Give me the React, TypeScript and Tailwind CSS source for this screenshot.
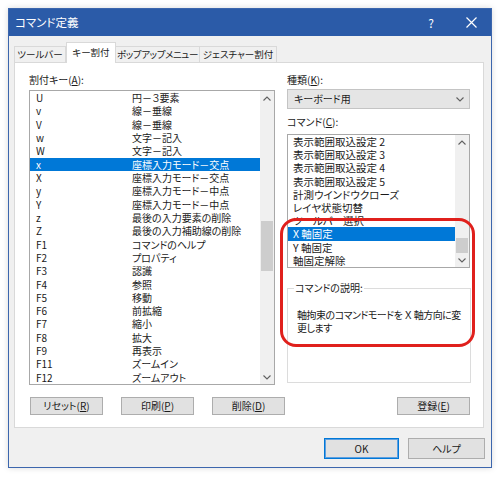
import React from "react";

const leftRows: [string, string][] = [
  ["U", "円－３要素"],
  ["v", "線－垂線"],
  ["V", "線－垂線"],
  ["w", "文字－記入"],
  ["W", "文字－記入"],
  ["x", "座標入力モード－交点"],
  ["X", "座標入力モード－交点"],
  ["y", "座標入力モード－中点"],
  ["Y", "座標入力モード－中点"],
  ["z", "最後の入力要素の削除"],
  ["Z", "最後の入力補助線の削除"],
  ["F1", "コマンドのヘルプ"],
  ["F2", "プロパティ"],
  ["F3", "認識"],
  ["F4", "参照"],
  ["F5", "移動"],
  ["F6", "前拡縮"],
  ["F7", "縮小"],
  ["F8", "拡大"],
  ["F9", "再表示"],
  ["F11", "ズームイン"],
  ["F12", "ズームアウト"],
];

const commands = [
  "表示範囲取込設定 2",
  "表示範囲取込設定 3",
  "表示範囲取込設定 4",
  "表示範囲取込設定 5",
  "計測ウインドウクローズ",
  "レイヤ状態切替",
  "ツールバー選択",
  "X 軸固定",
  "Y 軸固定",
  "軸固定解除",
];

function Chevron({ up }: { up?: boolean }) {
  return (
    <svg width="8" height="5" viewBox="0 0 8 5">
      <polyline
        points={up ? "0.5,4.5 4,1 7.5,4.5" : "0.5,0.5 4,4 7.5,0.5"}
        fill="none"
        stroke="#606060"
        strokeWidth="1.1"
      />
    </svg>
  );
}

function Scrollbar({ thumbTop, thumbH }: { thumbTop: number; thumbH: number }) {
  return (
    <div className="w-[14px] bg-[#f0f0f0] flex flex-col">
      <div className="h-[14px] flex items-center justify-center">
        <Chevron up />
      </div>
      <div className="flex-1 px-[1px]">
        <div className="bg-[#cdcdcd]" style={{ marginTop: thumbTop, height: thumbH }} />
      </div>
      <div className="h-[14px] flex items-center justify-center">
        <Chevron />
      </div>
    </div>
  );
}

function Btn({ children }: { children: React.ReactNode }) {
  return (
    <div className="w-[73px] h-[18px] bg-[#e1e1e1] border border-[#adadad] flex items-center justify-center text-[10px] leading-none">
      {children}
    </div>
  );
}

export default function App() {
  return (
    <div className="w-[500px] h-[489px] bg-white relative overflow-hidden font-['Noto_Sans_CJK_JP',sans-serif] [font-feature-settings:'palt'] text-[#1a1a1a]">
      <div className="ml-[8px] mt-[8px] w-[484px] h-[460px] border border-[#3c66ad] flex flex-col shadow-[0_0_6px_rgba(0,0,0,0.15)]">
        {/* title bar */}
        <div className="h-[27px] bg-[#2b5ba8] flex items-center text-white">
          <div className="pl-[6px] text-[11.5px] leading-none">コマンド定義</div>
          <div className="ml-auto w-[40px] text-center text-[12px] leading-none">?</div>
          <div className="w-[40px] flex justify-center">
            <svg width="11" height="11" viewBox="0 0 11 11">
              <path d="M0.5 0.5 L10.5 10.5 M10.5 0.5 L0.5 10.5" stroke="white" strokeWidth="1.2" />
            </svg>
          </div>
        </div>

        {/* body */}
        <div className="flex-1 bg-[#f0f0f0] pl-[5px] pt-[6px] flex flex-col">
          {/* tabs */}
          <div className="flex items-end h-[20px] text-[9.5px] leading-none whitespace-nowrap">
            <div className="w-[52px] h-[16px] border border-b-0 border-[#d9d9d9] bg-[#f0f0f0] flex items-center justify-center">ツールバー</div>
            <div className="w-[50px] h-[21px] -mb-[1px] border border-b-0 border-[#d9d9d9] bg-white flex items-center justify-center relative z-10">キー割付</div>
            <div className="w-[84px] h-[16px] border border-b-0 border-l-0 border-[#d9d9d9] bg-[#f0f0f0] flex items-center justify-center tracking-[-0.4px]">ポップアップメニュー</div>
            <div className="w-[77px] h-[16px] border border-b-0 border-l-0 border-[#d9d9d9] bg-[#f0f0f0] flex items-center justify-center">ジェスチャー割付</div>
          </div>

          {/* panel */}
          <div className="w-[470px] h-[366px] bg-white border border-[#d9d9d9] pl-[14px] pr-[13px] pt-[11px] text-[10px]">
            <div className="flex gap-[12px]">
              {/* left column */}
              <div className="w-[246px]">
                <div className="h-[12px] leading-[12px]">割付キー(<u>A</u>):</div>
                <div className="mt-[4px] h-[295px] border border-[#a8a8a8] bg-white flex">
                  <div className="flex-1 flex flex-col">
                    {leftRows.map(([k, d], i) => (
                      <div
                        key={i}
                        className={`h-[13.33px] leading-[13px] flex items-center whitespace-nowrap ${i === 5 ? "bg-[#0078d7] text-white" : ""}`}
                      >
                        <div className="w-[102px] pl-[6px]">{k}</div>
                        <div>{d}</div>
                      </div>
                    ))}
                  </div>
                  <Scrollbar thumbTop={116} thumbH={50} />
                </div>
              </div>

              {/* right column */}
              <div className="w-[183px]">
                <div className="h-[12px] leading-[12px]">種類(<u>K</u>):</div>
                <div className="mt-[3px] h-[20px] bg-[#e5e5e5] border border-[#c4c4c4] flex items-center pl-[6px] pr-[5px]">
                  <span className="leading-none">キーボード用</span>
                  <span className="ml-auto">
                    <Chevron />
                  </span>
                </div>
                <div className="mt-[7px] h-[12px] leading-[12px]">コマンド(<u>C</u>):</div>
                <div className="mt-[6px] h-[134px] border border-[#a8a8a8] bg-white flex">
                  <div className="flex-1 flex flex-col text-[10.5px]">
                    {commands.map((c, i) => (
                      <div
                        key={i}
                        className={`h-[13.33px] leading-[13px] pl-[5px] whitespace-nowrap ${i === 7 ? "bg-[#0078d7] text-white" : ""}`}
                      >
                        {c}
                      </div>
                    ))}
                  </div>
                  <Scrollbar thumbTop={89} thumbH={15} />
                </div>
                <fieldset className="mt-[14px] h-[101px] border border-[#dcdcdc] px-[9px] pt-[15px]">
                  <legend className="ml-[-3px] px-[1px] leading-[12px]">コマンドの説明:</legend>
                  <div className="leading-[12.5px] whitespace-nowrap tracking-[-0.5px]">
                    軸拘束のコマンドモードを Ｘ 軸方向に変
                    <br />
                    更します
                  </div>
                </fieldset>
              </div>
            </div>

            {/* buttons */}
            <div className="mt-[12px] flex gap-[18px] pl-[1px]">
              <Btn>
                リセット(<u>R</u>)
              </Btn>
              <Btn>
                印刷(<u>P</u>)
              </Btn>
              <Btn>
                削除(<u>D</u>)
              </Btn>
              <div className="ml-auto">
                <Btn>
                  登録(<u>E</u>)
                </Btn>
              </div>
            </div>
          </div>

          {/* footer */}
          <div className="mt-[10px] flex justify-end gap-[9px] pr-[6px] text-[10px] leading-none">
            <div className="w-[75px] h-[21px] bg-[#e1e1e1] border border-[#0078d7] shadow-[inset_0_0_0_1px_#5d9fe0] flex items-center justify-center">
              OK
            </div>
            <div className="w-[77px] h-[21px] bg-[#e1e1e1] border border-[#adadad] flex items-center justify-center">
              ヘルプ
            </div>
          </div>
        </div>
      </div>

      {/* red annotation */}
      <div className="absolute left-[280px] top-[218px] w-[195px] h-[129px] border-[3px] border-[#e0201c] rounded-[16px] pointer-events-none" />
    </div>
  );
}
